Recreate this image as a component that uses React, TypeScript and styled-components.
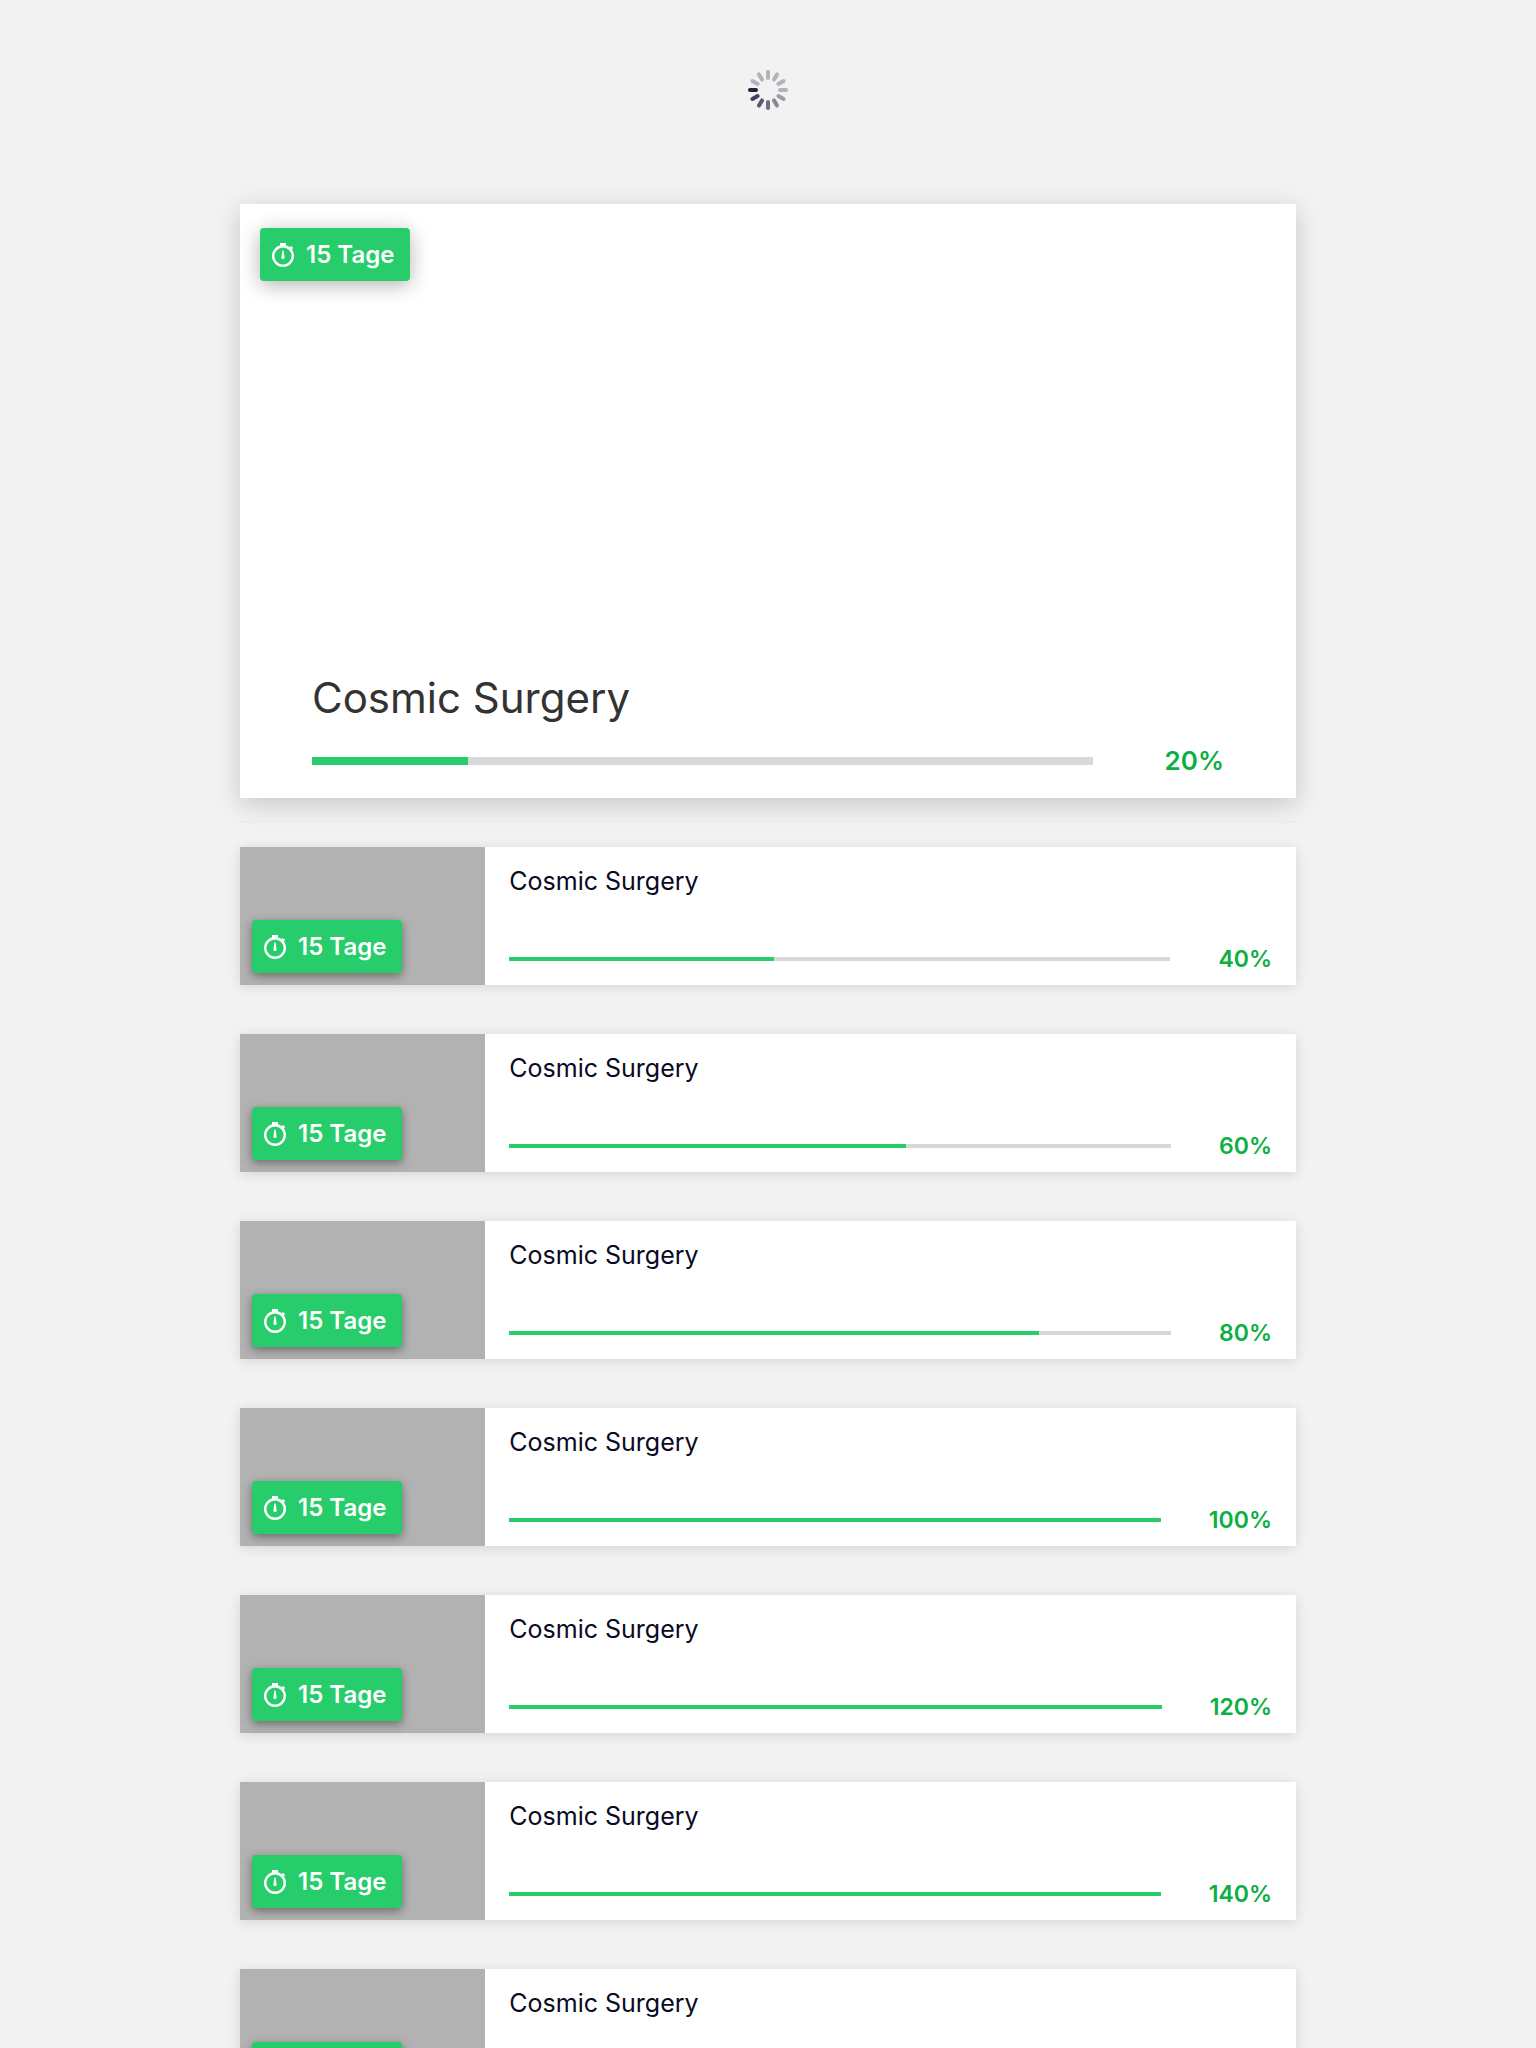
import React from 'react';
import styled, { createGlobalStyle } from 'styled-components';

const GlobalStyle = createGlobalStyle`
  *, *::before, *::after {
    box-sizing: border-box;
  }

  body {
    margin: 0;
    background: #f2f2f2;
    color: #0a0a23;
    font-family: Inter, 'Liberation Sans', sans-serif;
  }
`;

const Page = styled.main`
  width: 68.75%;
  margin: 0 auto;
  padding-bottom: 48px;
`;

const LoadingArea = styled.div`
  display: flex;
  justify-content: center;
  padding: 70px 0 94px;
`;

const Hero = styled.article`
  display: flex;
  flex-direction: column;
  justify-content: space-between;
  aspect-ratio: 16 / 9;
  background: #ffffff;
  box-shadow: 0 6px 24px rgba(0, 0, 0, 0.18);
`;

const HeroTop = styled.div`
  display: flex;
  padding: 24px 20px;
`;

const HeroBody = styled.div`
  display: flex;
  flex-direction: column;
  gap: 20px;
  padding: 0 72px 20px;
`;

const HeroTitle = styled.h1`
  margin: 0;
  color: #333333;
  font-size: 42px;
  font-weight: 400;
  line-height: 52px;
`;

const Divider = styled.hr`
  height: 2px;
  margin: 23px 0 24px;
  border: 0;
  background: #ececec;
`;

const List = styled.ul`
  display: flex;
  flex-direction: column;
  gap: 49px;
  margin: 0;
  padding: 0;
  list-style: none;
`;

const Row = styled.li`
  display: flex;
  height: 138px;
  background: #ffffff;
  box-shadow: 0 2px 12px rgba(0, 0, 0, 0.12);
`;

const Thumb = styled.div`
  display: flex;
  align-items: flex-end;
  flex: none;
  aspect-ratio: 16 / 9;
  padding: 12px;
  background: #b2b2b2;
`;

const RowBody = styled.div`
  display: flex;
  flex: 1;
  flex-direction: column;
  justify-content: space-between;
  min-width: 0;
  padding: 18px 24px 11px;
`;

const RowTitle = styled.h2`
  margin: 0;
  font-size: 25px;
  font-weight: 400;
  line-height: 32px;
`;

const BadgeBox = styled.span<{ $strong?: boolean }>`
  display: inline-flex;
  align-items: center;
  gap: 12px;
  height: 53px;
  padding: 0 16px 0 12px;
  border-radius: 4px;
  background: #27cc6b;
  color: #ffffff;
  font-size: 24px;
  font-weight: 600;
  line-height: 30px;
  white-space: nowrap;
  box-shadow: ${({ $strong }) =>
    $strong ? '0 4px 20px rgba(0, 0, 0, 0.3)' : '0 3px 10px rgba(0, 0, 0, 0.4)'};
`;

const ProgressLine = styled.div<{ $large?: boolean }>`
  display: flex;
  align-items: center;
  gap: ${({ $large }) => ($large ? '72px' : '48px')};
  color: #0cb042;
  font-size: ${({ $large }) => ($large ? '26px' : '23px')};
  font-weight: 600;
  line-height: ${({ $large }) => ($large ? '34px' : '30px')};
`;

const Bar = styled.progress<{ $large?: boolean }>`
  display: block;
  flex: 1;
  min-width: 0;
  height: ${({ $large }) => ($large ? '8px' : '4px')};
  border: 0;
  background: #d8d8d8;
  appearance: none;

  &::-webkit-progress-bar {
    background: #d8d8d8;
  }

  &::-webkit-progress-value {
    background: #27cc6b;
  }

  &::-moz-progress-bar {
    background: #27cc6b;
  }
`;

const SPOKES = [
  '#b3b3bc', '#b3b3bc', '#b3b3bc', '#b3b3bc', '#9d9da8', '#878794',
  '#6f6f80', '#5a5a6e', '#41415a', '#222240', '#b3b3bc', '#b3b3bc',
];

function Spinner() {
  return (
    <svg width="40" height="40" viewBox="0 0 40 40" role="img" aria-label="Laden">
      {SPOKES.map((color, i) => (
        <rect
          key={i}
          x="18"
          y="0"
          width="4"
          height="10"
          rx="2"
          fill={color}
          transform={`rotate(${i * 30} 20 20)`}
        />
      ))}
    </svg>
  );
}

function StopwatchIcon() {
  return (
    <svg width="22" height="24" viewBox="0 0 22 24" aria-hidden="true">
      <circle cx="11" cy="13" r="9.8" fill="none" stroke="#ffffff" strokeWidth="2.4" />
      <path d="M8 0h6v3.4H8z" fill="#ffffff" />
      <path d="M17 5l1.7-2 2.4 1.8-1.4 2.6z" fill="#ffffff" />
      <path d="M10.4 7.4h1.2l1 7a1.6 1.6 0 1 1-3.2 0z" fill="#ffffff" />
    </svg>
  );
}

function Badge({ days, strong }: { days: number; strong?: boolean }) {
  return (
    <BadgeBox $strong={strong}>
      <StopwatchIcon />
      {days} Tage
    </BadgeBox>
  );
}

function Progress({ percent, large }: { percent: number; large?: boolean }) {
  return (
    <ProgressLine $large={large}>
      <Bar $large={large} max={100} value={Math.min(percent, 100)} aria-label="Fortschritt" />
      <span>{percent}%</span>
    </ProgressLine>
  );
}

const projects = [40, 60, 80, 100, 120, 140, 160].map((percent) => ({
  title: 'Cosmic Surgery',
  days: 15,
  percent,
}));

export default function App() {
  return (
    <>
      <GlobalStyle />
      <Page>
        <LoadingArea>
          <Spinner />
        </LoadingArea>
        <Hero>
          <HeroTop>
            <Badge days={15} strong />
          </HeroTop>
          <HeroBody>
            <HeroTitle>Cosmic Surgery</HeroTitle>
            <Progress percent={20} large />
          </HeroBody>
        </Hero>
        <Divider />
        <List>
          {projects.map((project) => (
            <Row key={project.percent}>
              <Thumb>
                <Badge days={project.days} />
              </Thumb>
              <RowBody>
                <RowTitle>{project.title}</RowTitle>
                <Progress percent={project.percent} />
              </RowBody>
            </Row>
          ))}
        </List>
      </Page>
    </>
  );
}
